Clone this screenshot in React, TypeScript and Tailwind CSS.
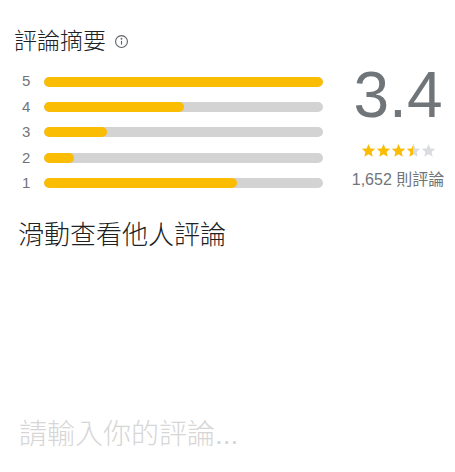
const ratings = [
  { star: 5, pct: 100 },
  { star: 4, pct: 50 },
  { star: 3, pct: 22.6 },
  { star: 2, pct: 10.7 },
  { star: 1, pct: 69 },
];

function Star({ fill, id }: { fill: number; id: string }) {
  return (
    <svg width="15" height="15" viewBox="0 0 24 24">
      <defs>
        <linearGradient id={id}>
          <stop offset={`${fill * 100}%`} stopColor="#fbbc04" />
          <stop offset={`${fill * 100}%`} stopColor="#dadce0" />
        </linearGradient>
      </defs>
      <path
        d="M12 1.5l3.1 7.1 7.7.7-5.8 5.1 1.7 7.6L12 18l-6.7 4 1.7-7.6-5.8-5.1 7.7-.7z"
        fill={`url(#${id})`}
      />
    </svg>
  );
}

export default function App() {
  return (
    <div className="w-[455px] h-[472px] bg-white font-['Liberation_Sans','Noto_Sans_CJK_TC',sans-serif] pt-[27px]">
      <div className="flex items-center pl-[14px]">
        <h2 className="text-[23px] leading-[28px] font-light text-[#202124]">評論摘要</h2>
        <svg className="ml-[8px] mt-[1px]" width="15" height="15" viewBox="0 0 24 24" fill="none" stroke="#5f6368" strokeWidth="1.8">
          <circle cx="12" cy="12" r="9.5" />
          <line x1="12" y1="11" x2="12" y2="17" />
          <circle cx="12" cy="7.5" r="0.6" fill="#5f6368" />
        </svg>
      </div>

      <div className="flex mt-[14px]">
        <div className="flex-1 pl-[22px]">
          {ratings.map((r) => (
            <div key={r.star} className="flex items-center h-[25.4px]">
              <span className="w-[22px] text-[15px] text-[#70757a]">{r.star}</span>
              <div className="flex-1 h-[10px] rounded-full bg-[#d3d3d3] overflow-hidden">
                <div className="h-full rounded-full bg-[#fbbc04]" style={{ width: `${r.pct}%` }} />
              </div>
            </div>
          ))}
        </div>
        <div className="w-[132px] pl-[18px] flex flex-col items-center -mt-[10px]">
          <div className="text-[64px] leading-[72px] text-[#70757a]">3.4</div>
          <div className="flex mt-[12px]">
            <Star fill={1} id="s1" />
            <Star fill={1} id="s2" />
            <Star fill={1} id="s3" />
            <Star fill={0.5} id="s4" />
            <Star fill={0} id="s5" />
          </div>
          <div className="mt-[10px] text-[16px] text-[#70757a]">1,652 則評論</div>
        </div>
      </div>

      <div className="pl-[18px] mt-[23px] text-[26px] leading-[32px] font-light text-[#202124]">滑動查看他人評論</div>

      <div className="pl-[19px] mt-[168px] text-[28px] leading-[32px] font-light text-[#d6d6d6]">請輸入你的評論...</div>
    </div>
  );
}
